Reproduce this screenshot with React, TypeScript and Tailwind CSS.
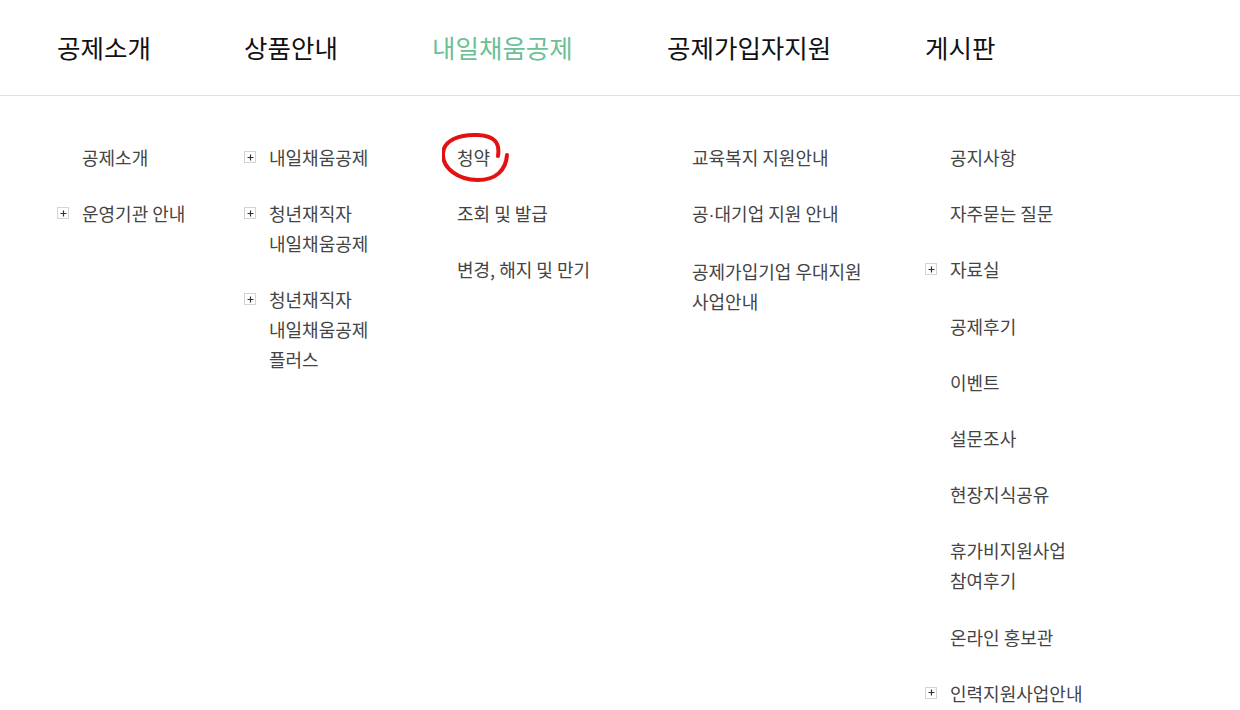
import { Fragment } from 'react';

type Item = { lines: string[]; plus?: boolean; circled?: boolean };

const FONT = '"Noto Sans CJK KR", "Noto Sans", sans-serif';

const TOP_MENU = [
  { label: '공제소개', width: 'w-[187px]' },
  { label: '상품안내', width: 'w-[188px]' },
  { label: '내일채움공제', width: 'w-[235px]', active: true },
  { label: '공제가입자지원', width: 'w-[258px]' },
  { label: '게시판', width: 'flex-1' },
];

const COLUMNS: Item[][] = [
  [
    { lines: ['공제소개'] },
    { lines: ['운영기관 안내'], plus: true },
  ],
  [
    { lines: ['내일채움공제'], plus: true },
    { lines: ['청년재직자', '내일채움공제'], plus: true },
    { lines: ['청년재직자', '내일채움공제', '플러스'], plus: true },
  ],
  [
    { lines: ['청약'], circled: true },
    { lines: ['조회 및 발급'] },
    { lines: ['변경, 해지 및 만기'] },
  ],
  [
    { lines: ['교육복지 지원안내'] },
    { lines: ['공·대기업 지원 안내'] },
    { lines: ['공제가입기업 우대지원', '사업안내'] },
  ],
  [
    { lines: ['공지사항'] },
    { lines: ['자주묻는 질문'] },
    { lines: ['자료실'], plus: true },
    { lines: ['공제후기'] },
    { lines: ['이벤트'] },
    { lines: ['설문조사'] },
    { lines: ['현장지식공유'] },
    { lines: ['휴가비지원사업', '참여후기'] },
    { lines: ['온라인 홍보관'] },
    { lines: ['인력지원사업안내'], plus: true },
  ],
];

function PlusBox() {
  return (
    <span className="mt-[9px] flex h-[12px] w-[12px] items-center justify-center border border-[#d4d4d4] bg-white">
      <svg width="7" height="7" viewBox="0 0 7 7">
        <path d="M3.5 0.5v6M0.5 3.5h6" stroke="#333" strokeWidth="1.2" />
      </svg>
    </span>
  );
}

function Scribble() {
  // hand-drawn red loop around the first item
  return (
    <svg
      className="pointer-events-none absolute left-[-15px] top-[-20px]"
      width="80"
      height="60"
      viewBox="442 125 80 60"
    >
      <path
        d="M498 159 C500 146 495 139 478 138 C460 137 444 143 443 156 C442 171 458 183 478 183 C496 183 506 173 507 158"
        fill="none"
        stroke="#e31212"
        strokeWidth="4"
        strokeLinecap="round"
      />
    </svg>
  );
}

// the narrow middle dot: CJK fonts draw it full width
function Line({ text }: { text: string }) {
  const parts = text.split('·');
  return (
    <>
      {parts.map((p, i) => (
        <Fragment key={i}>
          {i > 0 && <span className="font-['Liberation_Sans']">·</span>}
          {p}
        </Fragment>
      ))}
    </>
  );
}

function SubItem({ item }: { item: Item }) {
  return (
    <li className="flex gap-[13px]">
      <span className="w-[12px] shrink-0">{item.plus && <PlusBox />}</span>
      <span className="relative text-[18px] leading-[30px] text-[#444]">
        {item.lines.map((l, i) => (
          <Fragment key={i}>
            {i > 0 && <br />}
            <Line text={l} />
          </Fragment>
        ))}
        {item.circled && <Scribble />}
      </span>
    </li>
  );
}

export default function App() {
  return (
    <div className="h-[710px] w-[1240px] overflow-hidden bg-white" style={{ fontFamily: FONT }}>
      <nav className="flex h-[96px] items-center border-b border-[#e2e2e2] pl-[57px]">
        {TOP_MENU.map((m) => (
          <div
            key={m.label}
            className={`${m.width} text-[25.5px] ${m.active ? 'text-[#6cbf97]' : 'text-[#111]'}`}
          >
            {m.label}
          </div>
        ))}
      </nav>

      <div className="flex pl-[57px] pt-[46px]">
        {COLUMNS.map((col, ci) => (
          <ul key={ci} className={`${TOP_MENU[ci].width} flex flex-col gap-[26.2px]`}>
            {col.map((item, ii) => (
              <SubItem key={ii} item={item} />
            ))}
          </ul>
        ))}
      </div>
    </div>
  );
}
